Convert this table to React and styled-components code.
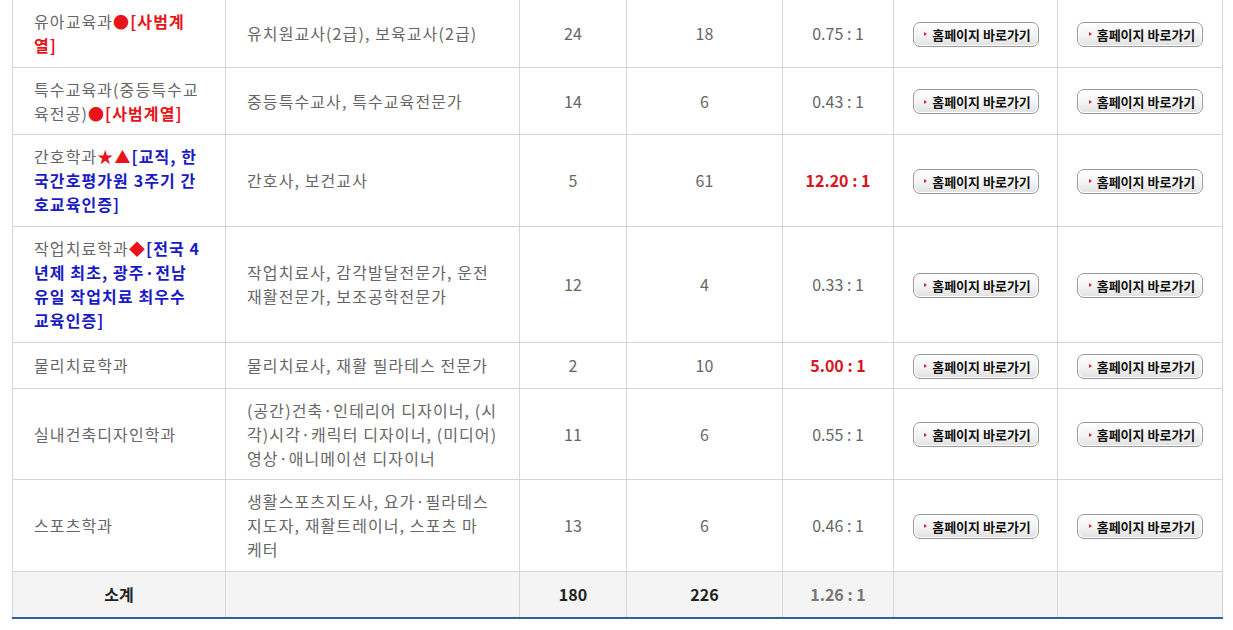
import React from 'react'
import styled, { createGlobalStyle } from 'styled-components'

const GlobalStyle = createGlobalStyle`
  body {
    margin: 0;
    background: #fff;
    font-family: "Noto Sans CJK KR", "Noto Sans", sans-serif;
  }
`

const Page = styled.div`
  padding: 0 10px 0 12px;
`

const Table = styled.table`
  width: 1211px;
  table-layout: fixed;
  border-collapse: collapse;
  border-bottom: 2px solid #2f6497;
  font-size: 16px;
  line-height: 24px;
  color: #666;
`

const Row = styled.tr`
  height: ${p => p.$h}px;
`

const SumRow = styled.tr`
  height: ${p => p.$h}px;
  background: #f4f4f4;
`

const TextCell = styled.td`
  border: 1px solid #d5d5d5;
  border-top: none;
  padding: 9px 6px 9px 21px;
  vertical-align: middle;
  letter-spacing: 1.1px;
  word-break: keep-all;
  white-space: nowrap;
`

const NumCell = styled.td`
  border: 1px solid #d5d5d5;
  border-top: none;
  padding: 9px 4px;
  text-align: center;
  vertical-align: middle;
  color: ${p => (p.$hot ? '#d9161c' : '#666')};
  font-weight: ${p => (p.$hot ? 700 : 400)};
`

const SumCell = styled.td`
  border: 1px solid #d5d5d5;
  border-bottom: none;
  padding: 9px 4px;
  text-align: center;
  vertical-align: middle;
  font-weight: 700;
  color: ${p => (p.$muted ? '#777' : '#222')};
`

const Red = styled.b`
  color: #e8141a;
`

const Blue = styled.b`
  color: #1a1ac4;
`

const LinkButton = styled.span`
  display: inline-flex;
  align-items: center;
  justify-content: center;
  box-sizing: border-box;
  width: 126px;
  height: 25px;
  padding-left: 4px;
  border: 1px solid #9a9a9a;
  border-radius: 7px;
  background: linear-gradient(#ffffff, #f3f3f3 55%, #e0e0e0);
  box-shadow: inset 0 0 0 1px #fff;
  font-size: 13px;
  font-weight: 700;
  line-height: 1;
  letter-spacing: 0;
  color: #111;
  vertical-align: middle;

  &::before {
    content: '';
    display: inline-block;
    margin-right: 5px;
    border-left: 3px solid #d8232a;
    border-top: 2.5px solid transparent;
    border-bottom: 2.5px solid transparent;
  }
`

const rows = [
  {
    h: 67,
    name: <>유아교육과<Red>●[사범계<br />열]</Red></>,
    job: <>유치원교사(2급), 보육교사(2급)</>,
    a: 24, b: 18, ratio: '0.75 : 1',
  },
  {
    h: 67,
    name: <>특수교육과(중등특수교<br />육전공)<Red>●[사범계열]</Red></>,
    job: <>중등특수교사, 특수교육전문가</>,
    a: 14, b: 6, ratio: '0.43 : 1',
  },
  {
    h: 92,
    name: <>간호학과<Red>★▲</Red><Blue>[교직, 한<br />국간호평가원 3주기 간<br />호교육인증]</Blue></>,
    job: <>간호사, 보건교사</>,
    a: 5, b: 61, ratio: '12.20 : 1', hot: true,
  },
  {
    h: 116,
    name: <>작업치료학과<Red>◆</Red><Blue>[전국 4<br />년제 최초, 광주·전남<br />유일 작업치료 최우수<br />교육인증]</Blue></>,
    job: <>작업치료사, 감각발달전문가, 운전<br />재활전문가, 보조공학전문가</>,
    a: 12, b: 4, ratio: '0.33 : 1',
  },
  {
    h: 45,
    name: <>물리치료학과</>,
    job: <>물리치료사, 재활 필라테스 전문가</>,
    a: 2, b: 10, ratio: '5.00 : 1', hot: true,
  },
  {
    h: 91,
    name: <>실내건축디자인학과</>,
    job: <>(공간)건축·인테리어 디자이너, (시<br />각)시각·캐릭터 디자이너, (미디어)<br />영상·애니메이션 디자이너</>,
    a: 11, b: 6, ratio: '0.55 : 1',
  },
  {
    h: 92,
    name: <>스포츠학과</>,
    job: <>생활스포츠지도사, 요가·필라테스<br />지도자, 재활트레이너, 스포츠 마<br />케터</>,
    a: 13, b: 6, ratio: '0.46 : 1',
  },
]

const widths = [213, 294, 107, 156, 111, 164, 165]

export default function App() {
  return (
    <>
      <GlobalStyle />
      <Page>
        <Table>
          <colgroup>
            {widths.map((w, i) => <col key={i} style={{ width: w }} />)}
          </colgroup>
          <tbody>
            {rows.map((r, i) => (
              <Row key={i} $h={r.h}>
                <TextCell>{r.name}</TextCell>
                <TextCell>{r.job}</TextCell>
                <NumCell>{r.a}</NumCell>
                <NumCell>{r.b}</NumCell>
                <NumCell $hot={r.hot}>{r.ratio}</NumCell>
                <NumCell><LinkButton>홈페이지 바로가기</LinkButton></NumCell>
                <NumCell><LinkButton>홈페이지 바로가기</LinkButton></NumCell>
              </Row>
            ))}
            <SumRow $h={47}>
              <SumCell>소계</SumCell>
              <SumCell />
              <SumCell>180</SumCell>
              <SumCell>226</SumCell>
              <SumCell $muted>1.26 : 1</SumCell>
              <SumCell />
              <SumCell />
            </SumRow>
          </tbody>
        </Table>
      </Page>
    </>
  )
}
